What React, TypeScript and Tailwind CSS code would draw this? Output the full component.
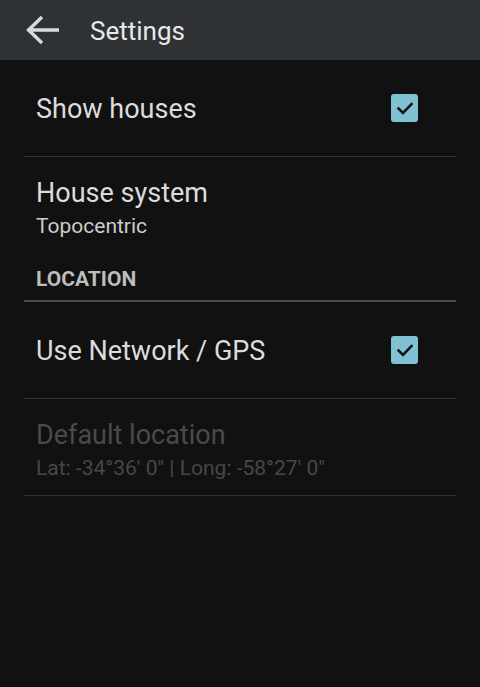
import React from "react";

function CheckBox() {
  return (
    <div className="w-[27px] h-[28px] rounded-[3px] bg-[#80c2d3] flex items-center justify-center">
      <svg width="20" height="20" viewBox="0 0 20 20" fill="none">
        <path d="M3.5 10.5 L8 15 L16.5 6" stroke="#151515" strokeWidth="2.6" strokeLinecap="square" />
      </svg>
    </div>
  );
}

function PrefRow({
  title,
  summary,
  checked,
  disabled,
  border = true,
}: {
  title: string;
  summary?: string;
  checked?: boolean;
  disabled?: boolean;
  border?: boolean;
}) {
  return (
    <div className={`h-[97px] flex items-center justify-between pl-3 pr-[38px] ${border ? "border-b border-[#303030]" : ""}`}>
      <div className={`flex flex-col ${summary ? "pt-[5px] gap-[2px]" : "pt-[2px]"}`}>
        <span className={`text-[27px] leading-[34px] ${disabled ? "text-[#4a4a4a]" : "text-[#dcdcdc]"}`}>{title}</span>
        {summary && (
          <span className={`text-[21px] leading-[28px] ${disabled ? "text-[#474747]" : "text-[#cccccc]"}`}>{summary}</span>
        )}
      </div>
      {checked && <CheckBox />}
    </div>
  );
}

export default function App() {
  return (
    <div className="w-[480px] h-[687px] bg-[#111111] font-['Roboto',sans-serif] overflow-hidden">
      {/* action bar */}
      <div className="h-[60px] bg-[#2f3235] flex items-center">
        <div className="w-[90px] flex items-center pl-[25px]">
          <svg width="35" height="32" viewBox="0 0 35 32" fill="none">
            <path d="M34 16 H4 M17 3 L3.5 16 L17 29" stroke="#dadada" strokeWidth="3.4" />
          </svg>
        </div>
        <span className="text-[26px] text-[#e8e8e8] leading-none pt-[2px]">Settings</span>
      </div>

      <div className="px-6">
        <PrefRow title="Show houses" checked />
        <div className="h-[96px] flex flex-col justify-center pl-3 pt-[5px] gap-[2px]">
          <span className="text-[27px] leading-[34px] text-[#dcdcdc]">House system</span>
          <span className="text-[21px] leading-[28px] text-[#cccccc]">Topocentric</span>
        </div>
        <div className="h-[49px] flex items-center pl-3 pt-[5px] border-b-2 border-[#4a4a4a]">
          <span className="text-[21px] font-bold text-[#bdbdbd] leading-none">LOCATION</span>
        </div>
        <PrefRow title="Use Network / GPS" checked />
        <PrefRow title="Default location" summary={`Lat: -34°36' 0" | Long: -58°27' 0"`} disabled />
      </div>
    </div>
  );
}
